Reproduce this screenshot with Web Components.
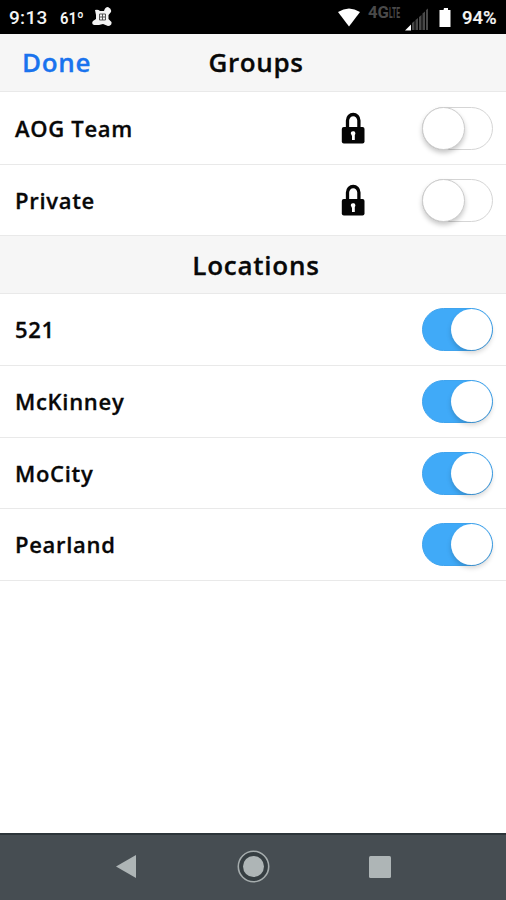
<!DOCTYPE html>
<html lang="en"><head><meta charset="utf-8"><title>Groups</title>
<style>html,body{margin:0;background:#fff}</style></head><body>
<group-screen></group-screen>
<script>
const define=(name,html)=>customElements.define(name,class extends HTMLElement{
  constructor(){super();const t=document.createElement('template');t.innerHTML=html;
    this.attachShadow({mode:'open'}).append(t.content.cloneNode(true));}
});

define('status-bar',`<style>
:host{display:flex;align-items:center;box-sizing:border-box;height:34px;padding:2px 8px 0 9px;background:#000;color:#f4f4f4;font:500 19px/32px Roboto,sans-serif}
span{white-space:nowrap}.time{width:51px;letter-spacing:.3px}.temp{font-size:17px;width:32px}
.temp b{display:inline-block;font-weight:600;transform:scaleX(.87);transform-origin:0 50%}
.space{flex:1}svg{display:block;flex:none}.pct{width:36px;margin-left:9px;font-size:18.500px;-webkit-text-stroke:.2px}
</style>
<span class="time">9:13</span><span class="temp"><b>61º</b></span>
<svg width="20" height="22" viewBox="0 0 20 22"><path d="M3 3Q6 2 8 4L12 4Q13 0 16 0Q20 2 19 5L16.500 8V12L19.500 15Q20 19 16 19L11 17L7 18L2 18Q-1 17 1 14L4 12V8Z" fill="#f4f4f4"/><path d="M7.500 7h6v6h-6zM10.500 7v6M7.500 10h6" fill="none" stroke="#555" stroke-width="1"/></svg>
<span class="space"></span>
<svg width="115" height="32" viewBox="0 0 115 32"><path d="M0 9Q11 2 22 9L11 23.500Z" transform="translate(0 1)" fill="#fff"/>
<g fill="#4a4a4a" font-family="Roboto,sans-serif" font-weight="700"><text x="30" y="16" font-size="17" textLength="21" lengthAdjust="spacingAndGlyphs">4G</text><text x="51" y="16" font-size="14" textLength="11" lengthAdjust="spacingAndGlyphs">LTE</text></g>
<path d="M67 28.500L73 22.500V28.500Z" fill="#fff"/><path d="M74 28v-7l2.500-2v9zM77.500 28V18l2.500-2v12zM81 28V15l2.500-2v15zM84.500 28V11.500l2.500-2V28zM88 28V8l2-1.500V28z" fill="#484848"/>
<path d="M104 6h4v2h2.500v17h-11V8h4z" fill="#fff" transform="translate(2 0)"/></svg>
<span class="pct">94%</span>`);

define('title-bar',`<style>
:host{display:grid;grid-template-columns:1fr auto 1fr;align-items:center;box-sizing:border-box;height:58px;padding:0 0 2px;background:#f6f6f6;border-bottom:1px solid #e9e9e9;color:#080808;font:600 26px/1 "Open Sans",sans-serif;letter-spacing:.65px;-webkit-text-stroke:.3px}
.left{padding-left:22px;color:#1a73ee;letter-spacing:.7px}
h1{margin:0;font:inherit;padding-left:6px}
:host([low]){padding:0;letter-spacing:.75px}
</style><div class="left"><slot name="action"></slot></div><h1><slot></slot></h1>`);

define('lock-icon',`<style>:host{display:block;width:24px;height:32px}svg{display:block}</style>
<svg width="24" height="32" viewBox="0 0 24 32"><path d="M6.500 16V8.500a5.700 6 0 0 1 11.400 0V16" fill="none" stroke="#050505" stroke-width="3.300"/><rect x=".8" y="15" width="22.700" height="16.500" rx="2" fill="#050505"/><path d="M9.800 21.500a2.300 2.300 0 1 1 4 1.500V28h-2.800v-4z" fill="#fff"/></svg>`);

define('toggle-switch',`<style>
:host{display:block;box-sizing:border-box;width:71px;height:43px;border:1.500px solid #d5d5d5;border-radius:22px;background:#fff}
i{display:block;box-sizing:border-box;width:43px;height:43px;margin:-1px;border:1px solid #ccc;border-radius:50%;background:#fff;box-shadow:0 3px 5px rgba(0,0,0,.22)}
:host([on]){background:#40aaf8;border-color:#40a4ee}
:host([on]) i{margin:0 0 0 28px;width:41px;height:41px;border:0;box-shadow:0 3px 5px rgba(0,0,0,.17)}
</style><i></i>`);

define('group-row',`<style>
:host{display:flex;align-items:center;box-sizing:border-box;height:71.700px;padding:0 13px 0 15px;border-bottom:1px solid #e9e9e9;color:#080808;font:600 22px/1 "Open Sans",sans-serif;letter-spacing:.7px;-webkit-text-stroke:.3px}
:host([first]){height:72.700px;padding-top:1px}
.label{flex:1;padding-bottom:1px}.extra{margin-right:57px}
</style><span class="label"><slot></slot></span><div class="extra"><slot name="icon"></slot></div><slot name="toggle"></slot>`);

define('nav-bar',`<style>
:host{display:flex;align-items:center;justify-content:space-between;box-sizing:border-box;height:67px;padding:0 115px 1px;border-top:2px solid #2d353a;background:#464d52}
svg{display:block}</style>
<svg width="22" height="26" viewBox="0 0 22 26"><path d="M21 1v23L1 12.500Z" fill="#aeb5b6"/></svg>
<svg width="34" height="34" viewBox="0 0 34 34"><circle cx="17.500" cy="16.500" r="15.200" fill="#363e42" stroke="#a5acad" stroke-width="1.600"/><circle cx="17.500" cy="16.500" r="10.500" fill="#aeb5b6"/></svg>
<svg width="22" height="23" viewBox="0 0 22 23"><rect width="22" height="22" rx="1.500" fill="#aeb5b6"/></svg>`);

define('group-screen',`<style>
:host{display:flex;flex-direction:column;width:506px;height:900px;background:#fff}
main{flex:1}
</style><status-bar></status-bar><main>
<title-bar><span slot="action">Done</span>Groups</title-bar>
<group-row first>AOG Team<lock-icon slot="icon"></lock-icon><toggle-switch slot="toggle"></toggle-switch></group-row>
<group-row>Private<lock-icon slot="icon"></lock-icon><toggle-switch slot="toggle"></toggle-switch></group-row>
<title-bar low>Locations</title-bar>
<group-row>521<toggle-switch slot="toggle" on></toggle-switch></group-row>
<group-row>McKinney<toggle-switch slot="toggle" on></toggle-switch></group-row>
<group-row>MoCity<toggle-switch slot="toggle" on></toggle-switch></group-row>
<group-row>Pearland<toggle-switch slot="toggle" on></toggle-switch></group-row>
</main><nav-bar></nav-bar>`);
</script></body></html>
